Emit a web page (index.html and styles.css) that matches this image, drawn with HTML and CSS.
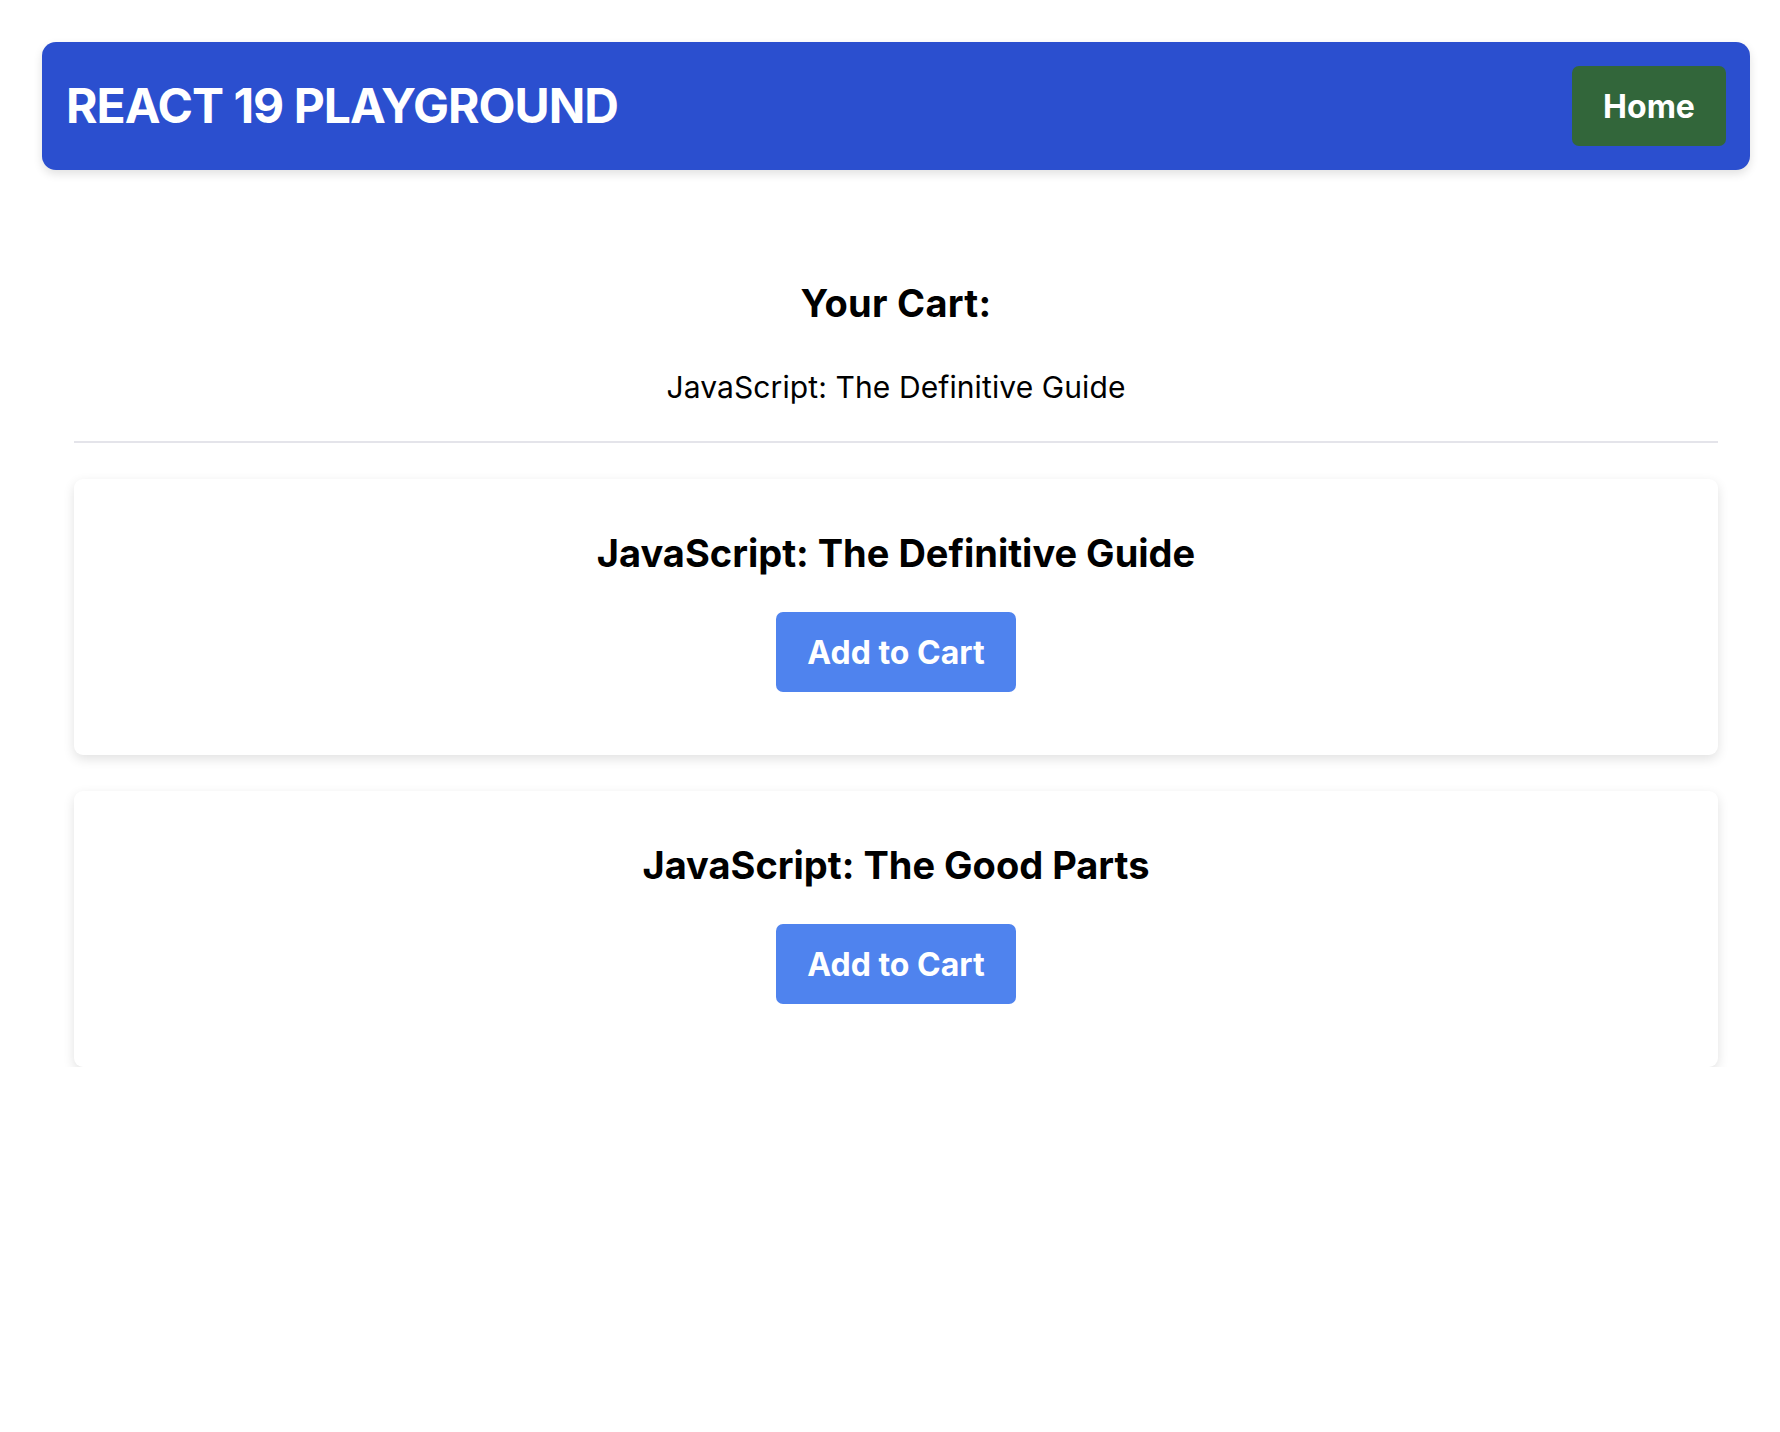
FILE: index.html
```html
<!DOCTYPE html>
<html lang="en">
<head>
<meta charset="utf-8">
<title>React 19 Playground</title>
<link rel="stylesheet" href="styles.css">
</head>
<body>
<header class="topbar">
  <h1 class="brand">REACT 19 PLAYGROUND</h1>
  <button class="home-btn">Home</button>
</header>
<main class="content">
  <section class="cart">
    <h2 class="cart-title">Your Cart:</h2>
    <p class="cart-item">JavaScript: The Definitive Guide</p>
  </section>
  <hr class="divider">
  <div class="card">
    <h2 class="card-title">JavaScript: The Definitive Guide</h2>
    <button class="add-btn">Add to Cart</button>
  </div>
  <div class="card">
    <h2 class="card-title">JavaScript: The Good Parts</h2>
    <button class="add-btn">Add to Cart</button>
  </div>
</main>
</body>
</html>
```
FILE: styles.css
```css
* { box-sizing: border-box; }
html, body { margin: 0; padding: 0; background: #ffffff; }
body {
  font-family: Inter, "Noto Sans", "Liberation Sans", sans-serif;
  color: #000;
}
.topbar {
  margin: 42px 30px 0 42px;
  padding: 24px;
  background: #2b4fcf;
  border-radius: 14px;
  display: flex;
  align-items: center;
  justify-content: space-between;
  box-shadow: 0 4px 10px rgba(0,0,0,0.12);
}
.brand {
  margin: 0;
  color: #fff;
  font-size: 48px;
  font-weight: 700;
  line-height: 1;
  letter-spacing: -1px;
}
.home-btn {
  height: 80px;
  width: 154px;
  border: none;
  border-radius: 7px;
  background: #32663a;
  color: #fff;
  font-family: inherit;
  font-size: 32px;
  font-weight: 700;
}
.content {
  margin: 0 62px 0 74px;
  padding-top: 111px;
}
.cart { text-align: center; }
.cart-title {
  margin: 0;
  font-size: 38px;
  line-height: 44px;
  font-weight: 700;
  letter-spacing: 0.3px;
}
.cart-item {
  margin: 44px 0 0;
  font-size: 30px;
  line-height: 36px;
  letter-spacing: 0.1px;
}
.divider {
  margin: 36px 0 0;
  border: none;
  height: 2px;
  background: #e4e4ea;
}
.card {
  margin-top: 36px;
  height: 276px;
  padding: 52px 32px 0;
  background: #fff;
  border-radius: 9px;
  box-shadow: 0 4px 12px rgba(0,0,0,0.12);
  display: flex;
  flex-direction: column;
  align-items: center;
}
.card-title {
  margin: 0;
  font-size: 38px;
  line-height: 44px;
  font-weight: 700;
}
.add-btn {
  margin-top: 37px;
  width: 240px;
  height: 80px;
  border: none;
  border-radius: 7px;
  background: #4f83ee;
  color: #fff;
  font-family: inherit;
  font-size: 32px;
  font-weight: 700;
}
```
